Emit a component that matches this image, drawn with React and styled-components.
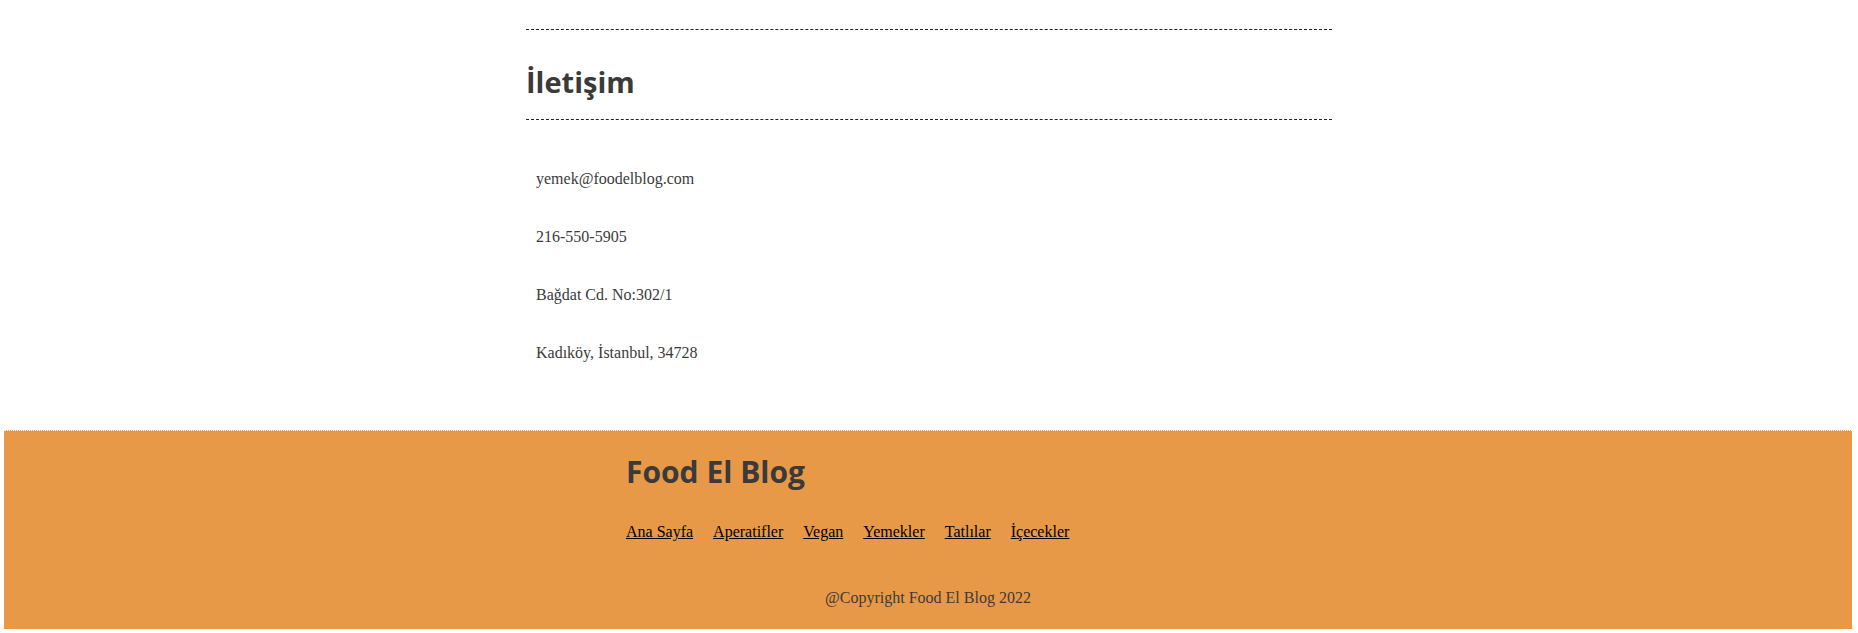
import React from 'react';
import styled, { createGlobalStyle } from 'styled-components';

const GlobalStyle = createGlobalStyle`
  body {
    margin: 0;
    background: #fff;
    font-family: "Liberation Serif", "Times New Roman", serif;
  }
`;

const Page = styled.div`
  padding-top: 29px;
`;

const Section = styled.section`
  width: 806px;
  margin: 0 auto;
`;

const SectionHeader = styled.div`
  border-top: 1px dashed #222;
  border-bottom: 1px dashed #222;
  padding: 32px 0 17px;
`;

const Heading = styled.h2`
  margin: 0;
  font-family: "Comic Sans MS", "Open Sans", sans-serif;
  font-weight: 700;
  font-size: ${(props) => props.size || 29}px;
  line-height: 40px;
  color: #3a3a3a;
`;

const ContactList = styled.div`
  display: flex;
  flex-direction: column;
  gap: 40px;
  padding: 50px 10px 68px;
`;

const ContactItem = styled.p`
  margin: 0;
  font-size: 16px;
  line-height: 18px;
  color: #3b3b3b;
`;

const Footer = styled.footer`
  margin: 0 6px 0 4px;
  background: #e79947;
  border-top: 1px dotted #fff;
  padding: 21px 0 22px;
`;

const FooterInner = styled.div`
  width: 604px;
  margin: 0 auto;
`;

const NavRow = styled.nav`
  display: flex;
  gap: 20px;
  margin-top: 31px;
`;

const NavLink = styled.a`
  font-size: 16px;
  line-height: 18px;
  color: #000;
  text-decoration: underline;
`;

const Copyright = styled.p`
  margin: 48px 0 0;
  text-align: center;
  font-size: 16px;
  line-height: 18px;
  color: #3f3a36;
`;

const contacts = [
  'yemek@foodelblog.com',
  '216-550-5905',
  'Bağdat Cd. No:302/1',
  'Kadıköy, İstanbul, 34728',
];

const links = ['Ana Sayfa', 'Aperatifler', 'Vegan', 'Yemekler', 'Tatlılar', 'İçecekler'];

export default function App() {
  return (
    <>
      <GlobalStyle />
      <Page>
        <Section>
          <SectionHeader>
            <Heading>İletişim</Heading>
          </SectionHeader>
          <ContactList>
            {contacts.map((c) => (
              <ContactItem key={c}>{c}</ContactItem>
            ))}
          </ContactList>
        </Section>
        <Footer>
          <FooterInner>
            <Heading size={30}>Food El Blog</Heading>
            <NavRow>
              {links.map((l) => (
                <NavLink key={l} href="#">
                  {l}
                </NavLink>
              ))}
            </NavRow>
            <Copyright>@Copyright Food El Blog 2022</Copyright>
          </FooterInner>
        </Footer>
      </Page>
    </>
  );
}
